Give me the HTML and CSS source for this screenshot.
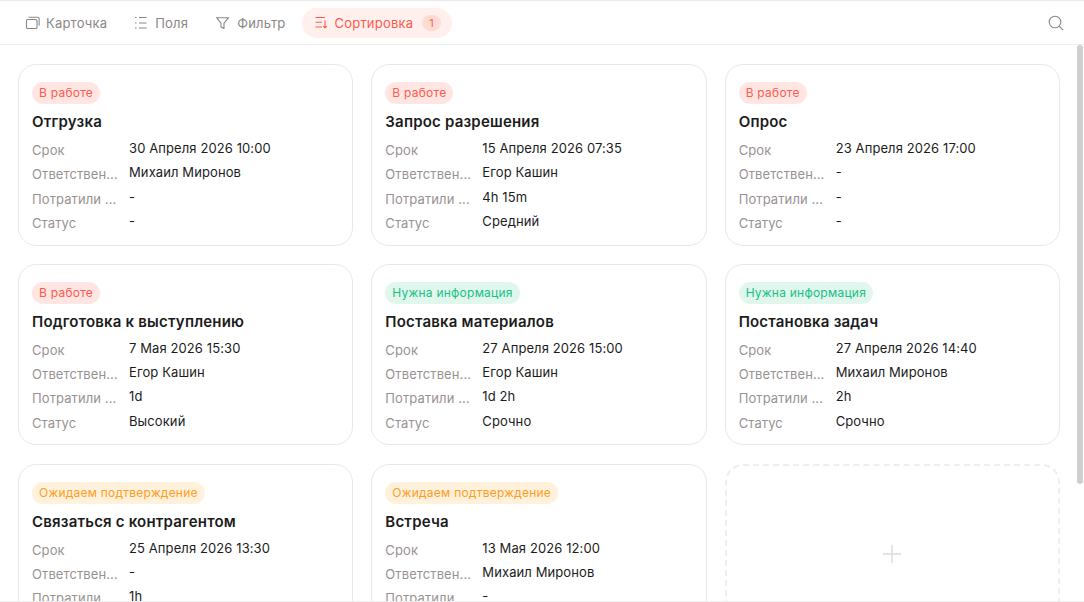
FILE: index.html
```html
<!DOCTYPE html>
<html lang="ru">
<head>
    <meta charset="UTF-8">
    <title>Карточки</title>
    <link rel="stylesheet" href="styles.css">
</head>
<body>
    <div class="toolbar">
        <div class="tool tool-first">
            <svg width="16" height="16" viewBox="0 0 16 16" fill="none" stroke="currentColor" stroke-width="1.1"><rect x="1.5" y="4.5" width="10.5" height="9" rx="1.3"/><path d="M3.5 2.3h9.3a1.3 1.3 0 0 1 1.3 1.3v7"/></svg>
            <span>Карточка</span>
        </div>
        <div class="tool">
            <svg width="16" height="16" viewBox="0 0 16 16" fill="none" stroke="currentColor" stroke-width="1"><path d="M5 2.500h7.500M5 8h7.500M5 13h7.500"/><path d="M1 2.500h1.500M1 8h1.500M1 13h1.500"/></svg>
            <span>Поля</span>
        </div>
        <div class="tool">
            <svg width="16" height="16" viewBox="0 0 16 16" fill="none" stroke="currentColor" stroke-width="1.1" stroke-linejoin="round"><path d="M.6 2.700h12L8 8.200v5.300l-3-1.600V8.200z"/></svg>
            <span>Фильтр</span>
        </div>
        <div class="tool tool-active">
            <svg width="16" height="16" viewBox="0 0 16 16" fill="none" stroke="currentColor" stroke-width="1.1"><path d="M1.500 2.500h9.500M1.500 7.300h6.500M1.500 12h6.500"/><path d="M11 5.500v7.500M9.200 11.200l1.800 1.800 1.800-1.800"/></svg>
            <span>Сортировка</span>
            <span class="count">1</span>
        </div>
        <svg class="search" width="16" height="16" viewBox="0 0 16 16" fill="none" stroke="currentColor" stroke-width="1.1"><circle cx="7" cy="7" r="5.800"/><path d="M11.200 11.200l4 4"/></svg>
    </div>

    <div class="content">
        <div class="cards">
            <div class="card">
                <span class="badge red">В работе</span>
                <div class="title">Отгрузка</div>
                <div class="row"><span class="label">Срок</span><span class="value">30 Апреля 2026 10:00</span></div>
                <div class="row"><span class="label">Ответствен...</span><span class="value">Михаил Миронов</span></div>
                <div class="row"><span class="label">Потратили ...</span><span class="value">-</span></div>
                <div class="row"><span class="label">Статус</span><span class="value">-</span></div>
            </div>
            <div class="card">
                <span class="badge red">В работе</span>
                <div class="title">Запрос разрешения</div>
                <div class="row"><span class="label">Срок</span><span class="value">15 Апреля 2026 07:35</span></div>
                <div class="row"><span class="label">Ответствен...</span><span class="value">Егор Кашин</span></div>
                <div class="row"><span class="label">Потратили ...</span><span class="value">4h 15m</span></div>
                <div class="row"><span class="label">Статус</span><span class="value">Средний</span></div>
            </div>
            <div class="card">
                <span class="badge red">В работе</span>
                <div class="title">Опрос</div>
                <div class="row"><span class="label">Срок</span><span class="value">23 Апреля 2026 17:00</span></div>
                <div class="row"><span class="label">Ответствен...</span><span class="value">-</span></div>
                <div class="row"><span class="label">Потратили ...</span><span class="value">-</span></div>
                <div class="row"><span class="label">Статус</span><span class="value">-</span></div>
            </div>
            <div class="card">
                <span class="badge red">В работе</span>
                <div class="title">Подготовка к выступлению</div>
                <div class="row"><span class="label">Срок</span><span class="value">7 Мая 2026 15:30</span></div>
                <div class="row"><span class="label">Ответствен...</span><span class="value">Егор Кашин</span></div>
                <div class="row"><span class="label">Потратили ...</span><span class="value">1d</span></div>
                <div class="row"><span class="label">Статус</span><span class="value">Высокий</span></div>
            </div>
            <div class="card">
                <span class="badge green">Нужна информация</span>
                <div class="title">Поставка материалов</div>
                <div class="row"><span class="label">Срок</span><span class="value">27 Апреля 2026 15:00</span></div>
                <div class="row"><span class="label">Ответствен...</span><span class="value">Егор Кашин</span></div>
                <div class="row"><span class="label">Потратили ...</span><span class="value">1d 2h</span></div>
                <div class="row"><span class="label">Статус</span><span class="value">Срочно</span></div>
            </div>
            <div class="card">
                <span class="badge green">Нужна информация</span>
                <div class="title">Постановка задач</div>
                <div class="row"><span class="label">Срок</span><span class="value">27 Апреля 2026 14:40</span></div>
                <div class="row"><span class="label">Ответствен...</span><span class="value">Михаил Миронов</span></div>
                <div class="row"><span class="label">Потратили ...</span><span class="value">2h</span></div>
                <div class="row"><span class="label">Статус</span><span class="value">Срочно</span></div>
            </div>
            <div class="card">
                <span class="badge orange">Ожидаем подтверждение</span>
                <div class="title">Связаться с контрагентом</div>
                <div class="row"><span class="label">Срок</span><span class="value">25 Апреля 2026 13:30</span></div>
                <div class="row"><span class="label">Ответствен...</span><span class="value">-</span></div>
                <div class="row"><span class="label">Потратили ...</span><span class="value">1h</span></div>
            </div>
            <div class="card">
                <span class="badge orange">Ожидаем подтверждение</span>
                <div class="title">Встреча</div>
                <div class="row"><span class="label">Срок</span><span class="value">13 Мая 2026 12:00</span></div>
                <div class="row"><span class="label">Ответствен...</span><span class="value">Михаил Миронов</span></div>
                <div class="row"><span class="label">Потратили ...</span><span class="value">-</span></div>
            </div>
            <div class="card-add">
                <svg width="20" height="20" viewBox="0 0 20 20" fill="none" stroke="#dcdcdc" stroke-width="1.5"><path d="M10 1v18M1 10h18"/></svg>
            </div>
        </div>
        <div class="thumb"></div>
    </div>
</body>
</html>
```

FILE: styles.css
```css
*
{
    box-sizing: border-box;
}
body
{
    margin: 0;
    height: 602px;
    overflow: hidden;
    display: flex;
    flex-direction: column;
    background-color: #fff;
    font-family: Inter, "Liberation Sans", sans-serif;
    font-size: 13px;
    letter-spacing: .1px;
    color: #1c1c1c;
    border-top: 1px solid #e9e9e9;
    border-bottom: 1px solid #efefef;
}
.toolbar
{
    flex: none;
    height: 44px;
    display: flex;
    align-items: center;
    padding: 0 20px 0 25px;
    border-bottom: 1px solid #eeeeee;
    letter-spacing: .2px;
}
.tool
{
    display: flex;
    align-items: center;
    gap: 5px;
    margin-right: 28px;
    color: #8c8686;
}
.tool-first
{
    margin-right: 27px;
}
.tool-active
{
    height: 30px;
    margin-left: -12px;
    padding: 0 11px 0 12px;
    border-radius: 15px;
    background-color: #fff0ee;
    color: #ff5a4f;
}
.count
{
    width: 19px;
    height: 16px;
    margin-left: 4px;
    border-radius: 8px;
    background-color: #ffdcd3;
    font-size: 11px;
    line-height: 16px;
    text-align: center;
}
.search
{
    margin-left: auto;
    color: #8c8686;
}
.content
{
    flex: 1;
    min-height: 0;
    position: relative;
    overflow: hidden;
    padding: 19px 24px 0 18px;
}
.cards
{
    display: grid;
    grid-template-columns: repeat(3, 1fr);
    gap: 18.25px 18px;
}
.card, .card-add
{
    height: 181.5px;
    border-radius: 18px;
}
.card
{
    border: 1px solid #e9e7e7;
    padding: 17px 13px 0;
}
.card-add
{
    display: flex;
    align-items: center;
    justify-content: center;
    border: 2px dashed #eeeeee;
}
.badge
{
    display: inline-block;
    height: 22px;
    padding: 0 7px;
    border-radius: 11px;
    font-size: 12px;
    line-height: 22px;
    letter-spacing: .24px;
    vertical-align: top;
}
.red
{
    background-color: #ffe6e3;
    color: #ff5a4f;
}
.green
{
    background-color: #e1f7ee;
    color: #17c184;
}
.orange
{
    background-color: #fff1dc;
    color: #ff9d1c;
}
.title
{
    margin-top: 7px;
    height: 22px;
    font-size: 15px;
    font-weight: 600;
    line-height: 22px;
    letter-spacing: .2px;
}
.row
{
    display: grid;
    grid-template-columns: 97px 1fr;
    height: 24.25px;
    line-height: 24px;
}
.title + .row
{
    margin-top: 3px;
}
.label
{
    padding-top: 2px;
    white-space: nowrap;
    color: #989292;
}
.thumb
{
    position: absolute;
    top: 0;
    right: 1px;
    width: 6px;
    height: 439px;
    border-radius: 3px;
    background-color: #cfcfcf;
}
```
